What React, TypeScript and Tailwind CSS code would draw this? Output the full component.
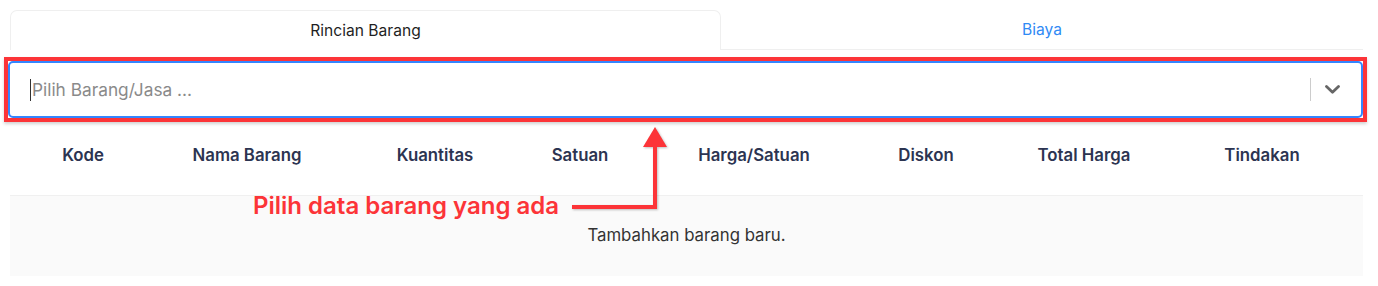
const COLS = [
  { label: "Kode", w: "w-[146px]" },
  { label: "Nama Barang", w: "w-[182px]" },
  { label: "Kuantitas", w: "w-[194px]" },
  { label: "Satuan", w: "w-[96px]" },
  { label: "Harga/Satuan", w: "w-[252px]" },
  { label: "Diskon", w: "w-[92px]" },
  { label: "Total Harga", w: "w-[224px]" },
  { label: "Tindakan", w: "w-[132px]" },
];

export default function App() {
  return (
    <main className="relative min-h-[286px] bg-white font-['Inter','Noto_Sans',sans-serif]">
      <div className="ml-[10px] w-[1353px] pt-[10px]">
        {/* tabs */}
        <div className="flex h-[40px]">
          <div className="flex w-[711px] items-center justify-center rounded-t-[7px] border border-b-0 border-[#efefef] text-[15.6px] text-[#1f1f1f]">
            Rincian Barang
          </div>
          <div className="flex flex-1 items-center justify-center border-b border-[#efefef] text-[15.6px] text-[#2f8af5]">
            Biaya
          </div>
        </div>

        {/* pilih barang */}
        <div className="-ml-[6px] mt-[7px] h-[65px] w-[1363px] border-4 border-[#fc3438] shadow-[0_2px_3px_rgba(0,0,0,0.18)]">
          <div className="flex h-full items-center rounded-[5px] border-2 border-[#3385ff] pl-[20px] pr-[21px]">
            <span className="mr-px h-[22px] w-px bg-[#333]" />
            <span className="flex-1 text-[17.3px] text-[#8a8a8a]">Pilih Barang/Jasa ...</span>
            <span className="h-[23px] w-px bg-[#cccccc]" />
            <svg className="ml-[14px]" width="15" height="9" viewBox="0 0 15 9">
              <polyline points="1.5,1.5 7.5,7.2 13.5,1.5" fill="none" stroke="#666" strokeWidth="2.8" strokeLinecap="round" strokeLinejoin="round" />
            </svg>
          </div>
        </div>

        {/* tabel */}
        <div className="flex border-b border-[#f0f0f0] pb-[28px] pt-[21px]">
          {COLS.map((c) => (
            <div key={c.label} className={`${c.w} text-center text-[16.8px] leading-[24px] font-semibold text-[#2c3451]`}>
              {c.label}
            </div>
          ))}
        </div>
        <div className="flex h-[80px] items-center justify-center bg-[#fafafa] text-[16.8px] text-[#333]">
          Tambahkan barang baru.
        </div>
      </div>

      {/* anotasi */}
      <div className="absolute left-[253px] top-[194px] text-[24px] leading-[24px] font-semibold text-[#fc3438]">
        Pilih data barang yang ada
      </div>
      <svg className="absolute left-0 top-0" width="1378" height="286">
        <g style={{ filter: "drop-shadow(1px 1px 1px rgba(0,0,0,0.25))" }}>
          <polyline points="572,207 655,207 655,145" fill="none" stroke="#fc3438" strokeWidth="4" />
          <polygon points="655,127 667,147 643,147" fill="#fc3438" />
        </g>
      </svg>
    </main>
  );
}
